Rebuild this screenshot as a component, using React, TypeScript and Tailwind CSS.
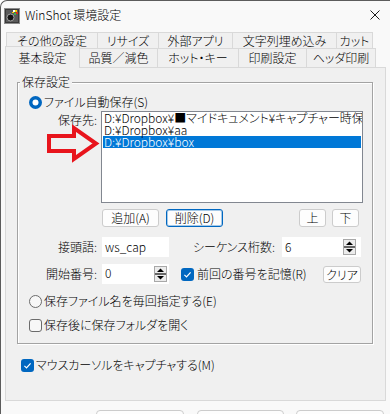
import React from "react";

function AppIcon() {
  return (
    <svg width="16" height="16" viewBox="0 0 16 16" className="block">
      <rect x="0" y="0" width="16" height="16" fill="#8c8c8c" />
      <rect x="1" y="1" width="14" height="14" fill="#3a3a3a" />
      <rect x="2" y="2" width="12" height="12" fill="#5a5a5a" />
      <circle cx="6.5" cy="9.5" r="3.5" fill="#151515" stroke="#a0a0a0" strokeWidth="1" />
      <rect x="9" y="2" width="2" height="2" fill="#ffffff" />
      <rect x="11" y="2" width="2" height="2" fill="#f2d000" />
      <rect x="12" y="4" width="2" height="2" fill="#e02a1a" />
      <rect x="10" y="5" width="2" height="2" fill="#3db04a" />
      <rect x="8" y="4" width="2" height="1" fill="#f2d000" />
    </svg>
  );
}

function Radio({ checked }: { checked?: boolean }) {
  return (
    <svg width="13" height="13" viewBox="0 0 13 13" className="block shrink-0">
      {checked ? (
        <>
          <circle cx="6.5" cy="6.5" r="6.5" fill="#0067c0" />
          <circle cx="6.5" cy="6.5" r="3" fill="#ffffff" />
        </>
      ) : (
        <circle cx="6.5" cy="6.5" r="6" fill="#f7f7f7" stroke="#6b6b6b" strokeWidth="1" />
      )}
    </svg>
  );
}

function Check({ checked }: { checked?: boolean }) {
  return (
    <svg width="13" height="13" viewBox="0 0 13 13" className="block shrink-0">
      {checked ? (
        <>
          <rect x="0" y="0" width="13" height="13" rx="3" fill="#0067c0" />
          <path d="M3.4 6.9 L5.5 8.9 L9.6 4.3" fill="none" stroke="#ffffff" strokeWidth="1.2" />
        </>
      ) : (
        <rect x="0.5" y="0.5" width="12" height="12" rx="2.5" fill="#f7f7f7" stroke="#6b6b6b" strokeWidth="1" />
      )}
    </svg>
  );
}

function Spinner() {
  return (
    <svg width="13" height="16" viewBox="0 0 13 16" className="block shrink-0">
      <rect x="0.5" y="0.5" width="12" height="15" fill="#ececec" stroke="#a8a8a8" />
      <line x1="1" y1="8" x2="12" y2="8" stroke="#3a3a3a" strokeWidth="1.4" />
      <path d="M6.5 2.5 L10 6 L3 6 Z" fill="#000000" />
      <path d="M3 10 L10 10 L6.5 13.5 Z" fill="#000000" />
    </svg>
  );
}

export default function App() {
  return (
    <div className="w-[390px] h-[414px] overflow-hidden bg-[#f9f9f9] border-l border-t border-[#5c5c5c] rounded-tl-[7px] font-['Noto_Sans_CJK_JP',sans-serif] font-light [font-feature-settings:'palt'] text-[12px] text-black flex flex-col">
      {/* title bar */}
      <div className="h-[27px] shrink-0 flex items-center">
        <div className="ml-[3px] mt-[2px]">
          <AppIcon />
        </div>
        <span className="ml-[5px] leading-[16px]">WinShot 環境設定</span>
        <svg width="10" height="10" viewBox="0 0 10 10" className="ml-auto mr-[10px] block">
          <path d="M0.5 0.5 L9.5 9.5 M9.5 0.5 L0.5 9.5" stroke="#1b1b1b" strokeWidth="1" />
        </svg>
      </div>

      {/* tabs */}
      <div className="mt-[4px] shrink-0 flex flex-col">
        <div className="flex ml-[5px] h-[16px]">
          <div className="w-[91px] h-[16px] border-t border-l border-[#d9d9d9] bg-[#f0f0f0] flex items-center justify-center leading-[15px]">その他の設定</div>
          <div className="w-[61px] h-[16px] border-t border-l border-[#d9d9d9] bg-[#f0f0f0] flex items-center justify-center leading-[15px]">リサイズ</div>
          <div className="w-[74px] h-[16px] border-t border-l border-[#d9d9d9] bg-[#f0f0f0] flex items-center justify-center leading-[15px]">外部アプリ</div>
          <div className="w-[104px] h-[16px] border-t border-l border-[#d9d9d9] bg-[#f0f0f0] flex items-center justify-center leading-[15px]">文字列埋め込み</div>
          <div className="w-[37px] h-[16px] border-t border-l border-r border-[#d9d9d9] bg-[#f0f0f0] flex items-center justify-center leading-[15px]">カット</div>
        </div>
        <div className="flex items-start ml-[4px] h-[19px]">
          <div className="relative z-10 -mt-[2px] w-[75px] h-[22px] border-t border-l border-r border-[#d9d9d9] bg-[#f0f0f0] flex items-center justify-center leading-[16px]">基本設定</div>
          <div className="w-[78px] h-[19px] border-t border-r border-[#d9d9d9] bg-[#f0f0f0] flex items-center justify-center leading-[16px]">品質／減色</div>
          <div className="w-[81px] h-[19px] border-t border-r border-[#d9d9d9] bg-[#f0f0f0] flex items-center justify-center leading-[16px]">ホット・キー</div>
          <div className="w-[68px] h-[19px] border-t border-r border-[#d9d9d9] bg-[#f0f0f0] flex items-center justify-center leading-[16px]">印刷設定</div>
          <div className="w-[69px] h-[19px] border-t border-r border-[#d9d9d9] bg-[#f0f0f0] flex items-center justify-center leading-[16px]">ヘッダ印刷</div>
        </div>
      </div>

      {/* panel */}
      <div className="ml-[4px] w-[381px] h-[334px] shrink-0 border border-[#d9d9d9] bg-[#f0f0f0] flex flex-col">
        {/* group box */}
        <div className="relative shrink-0 mt-[14px] ml-[11px] w-[356px] h-[262px] border border-[#a3a3a3] shadow-[inset_1px_1px_0_#ffffff,1px_1px_0_#ffffff] flex flex-col">
          <div className="absolute left-[2px] -top-[9px] px-[2px] bg-[#f0f0f0] leading-[16px]">保存設定</div>

          {/* radio 1 */}
          <div className="mt-[11px] h-[16px] shrink-0 flex items-center pl-[11px]">
            <Radio checked />
            <span className="ml-[2px] leading-[16px]">ファイル自動保存(S)</span>
          </div>

          {/* list */}
          <div className="relative mt-[1px] h-[92px] shrink-0 flex">
            <div className="w-[83px] pr-[4px] pt-[1px] text-right leading-[16px]">保存先:</div>
            <div className="w-[262px] h-[92px] border border-[#828790] bg-white overflow-hidden px-[1px]">
              <div className="h-[12px] leading-[12px] whitespace-nowrap pl-[1px]">D:¥Dropbox¥■マイドキュメント¥キャプチャー時保存</div>
              <div className="h-[12px] leading-[12px] whitespace-nowrap pl-[1px]">D:¥Dropbox¥aa</div>
              <div className="h-[12px] leading-[12px] whitespace-nowrap pl-[1px] bg-[#0078d7] text-white">D:¥Dropbox¥box</div>
            </div>
            <svg width="65" height="45" viewBox="0 0 65 45" className="absolute left-[22px] top-[9px]">
              <polygon
                points="9,16 34,16 34,8 56,23.5 34,39 34,31 9,31"
                fill="none"
                stroke="#e8141c"
                strokeWidth="4"
                strokeLinejoin="miter"
              />
            </svg>
          </div>

          {/* buttons */}
          <div className="mt-[6px] h-[18px] shrink-0 flex">
            <div className="ml-[84px] w-[57px] h-[18px] rounded-[3px] border border-[#cccccc] bg-[#fdfdfd] flex items-center justify-center leading-[16px]">追加(A)</div>
            <div className="ml-[7px] w-[57px] h-[18px] rounded-[3px] border border-[#0067c0] shadow-[inset_0_0_0_1px_rgba(0,103,192,0.35)] bg-[#fdfdfd] flex items-center justify-center leading-[16px]">削除(D)</div>
            <div className="ml-[76px] w-[27px] h-[18px] rounded-[3px] border border-[#cccccc] bg-[#fdfdfd] flex items-center justify-center leading-[16px]">上</div>
            <div className="ml-[6px] w-[27px] h-[18px] rounded-[3px] border border-[#cccccc] bg-[#fdfdfd] flex items-center justify-center leading-[16px]">下</div>
          </div>

          {/* prefix row */}
          <div className="mt-[10px] h-[20px] shrink-0 flex items-center">
            <div className="w-[84px] pr-[5px] text-right leading-[16px]">接頭語:</div>
            <div className="w-[67px] h-[20px] bg-white pl-[3px] flex items-center leading-[16px]">ws_cap</div>
            <div className="w-[113px] pr-[7px] text-right leading-[16px]">シーケンス桁数:</div>
            <div className="w-[79px] h-[20px] bg-white pl-[3px] flex items-center leading-[16px]">
              <span>6</span>
              <div className="ml-auto mr-[5px]">
                <Spinner />
              </div>
            </div>
          </div>

          {/* start number row */}
          <div className="mt-[7px] h-[20px] shrink-0 flex items-center">
            <div className="w-[84px] pr-[5px] text-right leading-[16px]">開始番号:</div>
            <div className="w-[67px] h-[20px] bg-white pl-[3px] flex items-center leading-[16px]">
              <span className="-mt-[3px]">0</span>
              <div className="ml-auto mr-[2px]">
                <Spinner />
              </div>
            </div>
            <div className="ml-[12px] mt-[1px]">
              <Check checked />
            </div>
            <span className="ml-[3px] leading-[16px]">前回の番号を記憶(R)</span>
            <div className="ml-auto mr-[11px] w-[38px] h-[17px] rounded-[3px] border border-[#cccccc] bg-[#fdfdfd] flex items-center justify-center leading-[15px]">クリア</div>
          </div>

          {/* radio 2 */}
          <div className="mt-[9px] h-[16px] shrink-0 flex items-center pl-[11px]">
            <Radio />
            <span className="ml-[2px] leading-[16px]">保存ファイル名を毎回指定する(E)</span>
          </div>

          {/* checkbox open folder */}
          <div className="mt-[8px] h-[16px] shrink-0 flex items-center pl-[11px]">
            <Check />
            <span className="ml-[2px] leading-[16px]">保存後に保存フォルダを開く</span>
          </div>
        </div>

        {/* mouse cursor checkbox */}
        <div className="mt-[13px] h-[16px] shrink-0 flex items-center pl-[15px]">
          <Check checked />
          <span className="ml-[2px] leading-[16px]">マウスカーソルをキャプチャする(M)</span>
        </div>
      </div>

      {/* dialog buttons */}
      <div className="mt-[9px] h-[20px] shrink-0 flex">
        <div className="ml-[95px] w-[88px] h-[20px] rounded-[4px] border border-[#cccccc] bg-[#fdfdfd]" />
        <div className="ml-[13px] w-[87px] h-[20px] rounded-[4px] border border-[#cccccc] bg-[#fdfdfd]" />
        <div className="ml-[12px] w-[88px] h-[20px] rounded-[4px] border border-[#cccccc] bg-[#fdfdfd]" />
      </div>
    </div>
  );
}
